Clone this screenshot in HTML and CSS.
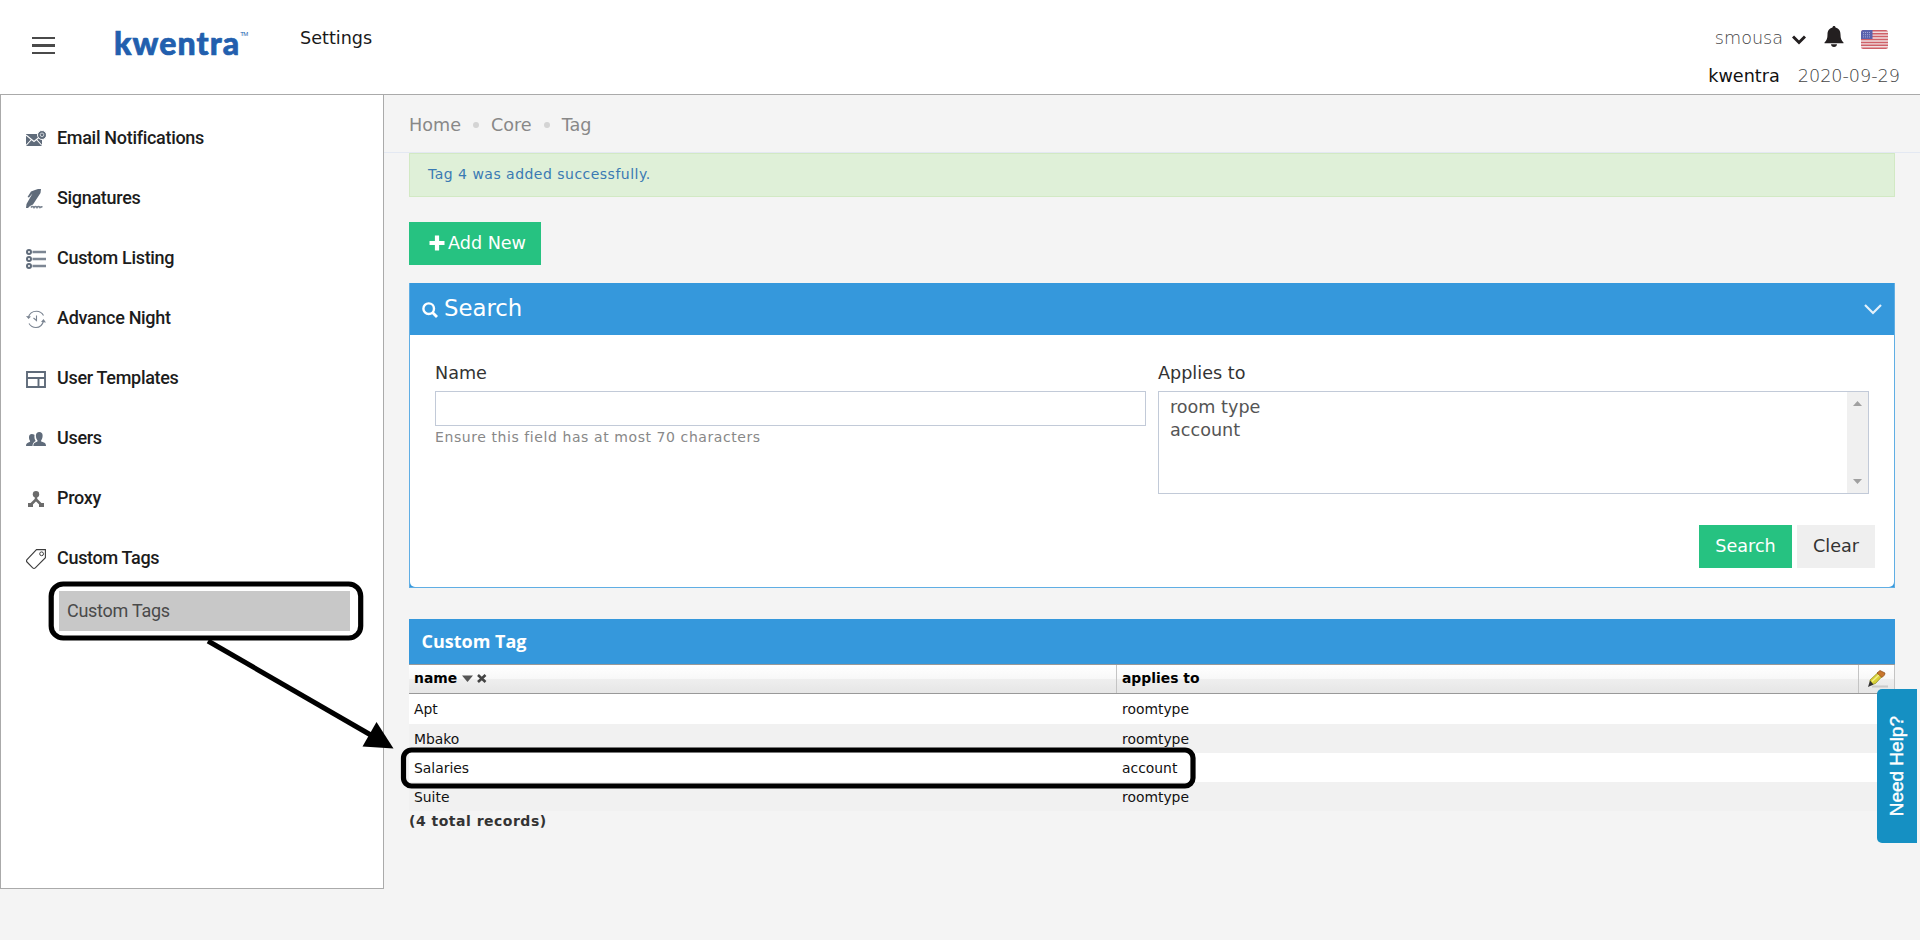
FILE: index.html
```
<!DOCTYPE html>
<html lang="en">
<head>
<meta charset="utf-8">
<title>Settings</title>
<link rel="stylesheet" href="styles.css">
</head>
<body>
<div class="page">
  <header class="topbar">
    <svg class="menu-icon" width="23" height="17" viewBox="0 0 23 17"><path d="M0 1h23M0 16h23" stroke="#4a4a4a" stroke-width="2"/><path d="M0 8.500h23" stroke="#4a4a4a" stroke-width="3"/></svg>
    <div class="logo">kwentra<span class="logo-tm">TM</span></div>
    <div class="topbar-title">Settings</div>
    <div class="account">
      <div class="account-row account-row-first">
        <span class="user">smousa</span>
        <svg class="caret" width="14" height="10" viewBox="0 0 14 10"><path d="M1 1.5l6 6 6-6" fill="none" stroke="#231f20" stroke-width="3"/></svg>
        <svg class="bell" width="20" height="21" viewBox="0 0 20 21"><path fill="#231f20" d="M10 0c1 0 1.500.6 1.500 1.500 3.500.8 5 3.500 5 7 0 4 1 6 3 8v.8H.5v-.8c2-2 3-4 3-8 0-3.500 1.500-6.200 5-7C8.500.6 9 0 10 0zM7 18.300h6c0 1.600-1.300 2.700-3 2.700s-3-1.100-3-2.700z"/></svg>
        <svg class="flag" width="27" height="19" viewBox="0 0 27 19"><defs><clipPath id="fc"><rect width="27" height="19" rx="2.500"/></clipPath></defs><g clip-path="url(#fc)"><rect width="27" height="19" fill="#f1dfe1"/><path d="M0 .8h27M0 3.700h27M0 6.600h27M0 9.500h27M0 12.400h27M0 15.300h27M0 18.200h27" stroke="#cf6068" stroke-width="1.500"/><rect width="11.500" height="9" fill="#5b62ad"/><path d="M2 2.500h8M2 4.700h8M2 6.900h8" stroke="#a3a8d6" stroke-width="1" stroke-dasharray="1 1"/></g></svg>
      </div>
      <div class="account-row account-row-second"><span class="tenant">kwentra</span><span class="date">2020-09-29</span></div>
    </div>
  </header>
  <div class="body">
    <nav class="sidebar">
      <a class="item"><svg width="20" height="20" viewBox="0 0 20 20"><path fill="#5f6b7a" d="M0 5h16v12H0z"/><path d="M0 6l8 6.500L16 6M0 16.500l5.500-6M16 16.500l-5.500-6" fill="none" stroke="#fff" stroke-width="1.100"/><circle cx="16" cy="6" r="4.500" fill="#5f6b7a" stroke="#fff"/><circle cx="16" cy="5.800" r="1.800" fill="none" stroke="#d7dbe0" stroke-width=".9"/></svg>Email Notifications</a>
      <a class="item"><svg width="20" height="20" viewBox="0 0 20 20"><path fill="#5f6b7a" d="M9 1l3-1h3l-.5 4L7 15.500l-3 1.500-2 2H0l.5-4L6.500 4.500 3 8.500 1.500 8 5 2.500z"/><path d="M5 18.500q1.500-2 3 0 1.500-2 3 0 1.500-2 3 0 1-1 2.500-.5" fill="none" stroke="#7a8491" stroke-width="1.700"/></svg>Signatures</a>
      <a class="item"><svg width="20" height="20" viewBox="0 0 20 20"><g fill="none" stroke="#5f6b7a" stroke-width="2"><circle cx="3" cy="3" r="2"/><circle cx="3" cy="10" r="2"/><circle cx="3" cy="17" r="2"/></g><path d="M6.500 3H20M6.500 10H20M6.500 17H20" stroke="#7c8693" stroke-width="2.300"/></svg>Custom Listing</a>
      <a class="item"><svg width="20" height="20" viewBox="0 0 20 20"><path d="M2.500 8.500C3.500 4 7 2.200 10.500 2.200c3 0 5.500 1.500 7 4.300M17.500 12c-1 4-4 6.500-7.500 6.500-3 0-5.500-1.500-7-4M10.500 6.500v5l-3-2.500" fill="none" stroke="#7a8491" stroke-width="1.100"/><path fill="#7a8491" d="M0 7l5 .5L2.500 10zM20 13.500l-5-.5 2.500-3z"/></svg>Advance Night</a>
      <a class="item"><svg width="20" height="20" viewBox="0 0 20 20"><path d="M1 3h18v15H1zM1 9h18M12.500 9v9" fill="none" stroke="#5f6b7a" stroke-width="1.900"/></svg>User Templates</a>
      <a class="item"><svg width="20" height="20" viewBox="0 0 20 20"><path fill="#5f6b7a" d="M0 17c0-2.500 1-3 3.500-4 .8-.4.8-1 .3-1.600C2.700 9.700 2.300 5 5.800 5c2 0 2.700 1 2.700 1-.3 2 0 4.500 1.200 6-1.700.8-3 2-3.200 5z"/><path fill="#5f6b7a" d="M7.300 17c0-2.500 1-3.200 3.500-4.200 1-.4.900-1.100.4-1.800C9.500 8.500 9 3 13.300 3s3.800 5.500 2.100 8c-.5.700-.5 1.400.4 1.800 3.200 1 4.200 1.700 4.200 4.200z"/></svg>Users</a>
      <a class="item"><svg width="20" height="20" viewBox="0 0 20 20"><circle cx="10" cy="5.200" r="3.200" fill="#6b6b6b"/><path d="M10 7v4.500M10 10.500l-5.500 5.500M10 10.500l5.500 5.500" stroke="#6b6b6b" stroke-width="2.500"/><path fill="#6b6b6b" d="M2 14h5v4H2zM13 14h5v4h-5z"/></svg>Proxy</a>
      <a class="item"><svg width="20" height="20" viewBox="0 0 20 20"><path d="M10.500.6L19.400.6 19.400 8.700 9.300 18.800Q8 20 6.700 18.800L1 13Q0 12 1 10.700z" fill="none" stroke="#3c3c3c" stroke-width="1.100"/><circle cx="15.600" cy="4.800" r="1.900" fill="none" stroke="#3c3c3c"/></svg>Custom Tags</a>
      <a class="subitem">Custom Tags</a>
    </nav>
    <main class="main">
      <div class="crumbs"><span>Home</span><i></i><span>Core</span><i></i><span>Tag</span></div>
      <div class="content">
        <div class="alert">Tag 4 was added successfully.</div>
        <a class="btn btn-green btn-add"><svg width="16" height="16" viewBox="0 0 16 16"><path d="M8 .5v15M.5 8h15" stroke="#fff" stroke-width="4.200"/></svg>Add New</a>
        <section class="panel">
          <div class="panel-head">
            <svg width="16" height="16" viewBox="0 0 16 16"><circle cx="6.700" cy="6.700" r="5.300" fill="none" stroke="#fff" stroke-width="2.400"/><path d="M10.500 10.500l4.500 4.500" stroke="#fff" stroke-width="2.800"/></svg>
            <h2>Search</h2>
            <svg class="panel-caret" width="18" height="11" viewBox="0 0 18 11"><path d="M1 1l8 8 8-8" fill="none" stroke="#e4f1fb" stroke-width="2.200"/></svg>
          </div>
          <div class="panel-body">
            <div class="fields">
              <div class="field">
                <label>Name</label>
                <div class="input"></div>
                <div class="hint">Ensure this field has at most 70 characters</div>
              </div>
              <div class="field">
                <label>Applies to</label>
                <div class="listbox">
                  <div class="options"><div>room type</div><div>account</div></div>
                  <div class="scroll"><svg width="9" height="5" viewBox="0 0 9 5"><path d="M0 5L4.500 0 9 5z" fill="#a0a0a0"/></svg><svg width="9" height="5" viewBox="0 0 9 5"><path d="M0 0l4.500 5L9 0z" fill="#a0a0a0"/></svg></div>
                </div>
              </div>
            </div>
            <div class="actions"><a class="btn btn-green btn-search">Search</a><a class="btn btn-clear">Clear</a></div>
          </div>
        </section>
        <section class="grid">
          <div class="grid-title">Custom Tag</div>
          <div class="row row-head">
            <div class="cell">name <svg class="sort" width="25" height="10" viewBox="0 0 25 10"><path fill="#555" d="M0 2.500h11L5.500 9z"/><path d="M16 2l7.500 7M23.500 2l-7.500 7" stroke="#444" stroke-width="2.600"/></svg></div>
            <div class="cell">applies to</div>
            <div class="cell cell-edit"><svg width="22" height="18" viewBox="0 0 22 18"><path d="M5 16.500h16" stroke="#bdbdbd" stroke-width="2" opacity=".7"/><path d="M3 10L10.500 3 15.500 6 8.500 13.500 3.500 15z" fill="#d8d036" stroke="#8d861c" stroke-width=".7"/><path d="M5 11.500l7.500-7" stroke="#f3ee8a" stroke-width="1.500"/><path d="M10 3L13 .5 18 3 17.500 5 15 7.500z" fill="#c9772e" stroke="#8a4c17" stroke-width=".7"/><path d="M3 10.500l3.500 4L1 17z" fill="#333"/></svg></div>
          </div>
          <div class="row row-first"><div class="cell">Apt</div><div class="cell">roomtype</div></div>
          <div class="row row-alt"><div class="cell">Mbako</div><div class="cell">roomtype</div></div>
          <div class="row"><div class="cell">Salaries</div><div class="cell">account</div></div>
          <div class="row row-alt"><div class="cell">Suite</div><div class="cell">roomtype</div></div>
          <div class="total">(4 total records)</div>
        </section>
      </div>
    </main>
  </div>
</div>
<svg class="callouts" width="1920" height="943" viewBox="0 0 1920 943">
  <rect x="51.200" y="584" width="309.500" height="54" rx="12" fill="none" stroke="#000" stroke-width="5.200"/>
  <rect x="403.500" y="750" width="789.500" height="36" rx="8" fill="none" stroke="#000" stroke-width="5.200"/>
  <path d="M208 641L376 738" stroke="#000" stroke-width="5"/>
  <path d="M393.500 748.500L376.500 722 362.500 746.500z" fill="#000"/>
</svg>
<a class="help"><span>Need Help?</span></a>
</body>
</html>
```
FILE: styles.css
```
* { box-sizing: border-box; }
body {
  margin: 0;
  background: #fff;
  color: #222;
  font: 17.6px/26px "DejaVu Sans", sans-serif;
  overflow: hidden;
}
.page { height: 940px; background: #f4f4f4; }

.topbar {
  height: 95px;
  display: flex;
  align-items: flex-start;
  background: #fff;
  border-bottom: 1px solid #aaa;
}
.menu-icon { margin: 37px 0 0 32px; }
.logo {
  display: flex;
  width: 135px;
  margin: 21px 0 0 59px;
  font: 900 32px/44px Lato, sans-serif;
  letter-spacing: 1.1px;
  -webkit-text-stroke: .7px #225fae;
  color: #225fae;
}
.logo-tm { font: 6px/26px "Liberation Sans", sans-serif; letter-spacing: -.5px; -webkit-text-stroke: 0; }
.topbar-title { margin: 25px 0 0 51px; color: #1a1a1a; }
.account { margin: 25px 20px 0 auto; }
.account-row { display: flex; align-items: flex-start; }
.account-row-first { justify-content: flex-end; margin-right: 12px; }
.account-row-second { margin-top: 12px; }
.user { font-weight: 200; color: #444; }
.caret { margin: 10px 0 0 9px; }
.bell { margin: 1px 0 0 18px; }
.flag { margin: 5px 0 0 17px; }
.tenant { color: #111; }
.date { margin-left: 18px; font-weight: 200; color: #444; }

.body { display: flex; align-items: flex-start; }
.sidebar {
  width: 384px;
  height: 794px;
  padding-top: 13px;
  background: #fff;
  border: 1px solid #aaa;
  border-top: 0;
}
.item {
  display: flex;
  height: 60px;
  padding-left: 25px;
  gap: 11px;
  align-items: center;
  font: 500 18px/26px Roboto, sans-serif;
  letter-spacing: -.31px;
  color: #1c1c1c;
}
.item svg { margin-top: 1px; }
.subitem {
  display: block;
  width: 291px;
  margin: 3px 0 0 58px;
  padding-left: 8px;
  background: #c8c8c8;
  font: 18px/40px Roboto, sans-serif;
  letter-spacing: -.27px;
  color: #4a4a4a;
}

.main { flex: 1; }
.crumbs {
  display: flex;
  align-items: center;
  height: 58px;
  padding: 2px 0 0 25px;
  border-bottom: 1px solid #e3e8f2;
  color: #888;
}
.crumbs i { width: 6px; height: 6px; margin: 0 12px; border-radius: 50%; background: #d4d4d4; }
.content { padding: 0 25px; }
.alert {
  height: 44px;
  padding-left: 18px;
  background: #dff0d8;
  border: 1px solid #d2e9c4;
  font-size: 14px;
  letter-spacing: .48px;
  line-height: 40px;
  color: #3a7ab3;
}
.btn { display: inline-flex; height: 43px; padding-bottom: 2px; align-items: center; justify-content: center; }
.btn-green { background: #26c281; color: #fff; }
.btn-add { display: flex; width: 132px; margin-top: 25px; padding-left: 5px; gap: 3px; }
.btn-search { width: 93px; }
.btn-clear { width: 78px; background: #efefef; color: #333; }

.panel { height: 305px; margin-top: 18px; background: #3598dc; border: 1px solid #60aee4; border-top: 0; }
.panel-head { display: flex; height: 52px; padding: 0 12px; align-items: center; color: #fff; }
.panel-head svg { margin-top: 2px; }
.panel-head .panel-caret { margin-top: 0; }
.panel-head h2 { margin: 0 auto 2px 6px; font-size: 22.8px; font-weight: 400; }
.panel-body { height: 252px; padding: 25px; background: #fff; border-radius: 0 0 5px 5px; }
.fields { display: grid; grid-template-columns: 1fr 1fr; gap: 12px; height: 165px; }
.field label { display: block; height: 31px; color: #333; }
.input { height: 35px; border: 1px solid #c2cad8; }
.hint { font-size: 14px; letter-spacing: .58px; line-height: 22px; color: #888; }
.listbox { display: flex; height: 103px; border: 1px solid #c2cad8; }
.options { flex: 1; padding: 4px 0 0 11px; line-height: 23px; color: #555; }
.scroll { display: flex; flex-direction: column; justify-content: space-between; align-items: center; width: 21px; padding: 9px 0; background: #f0f0f0; }
.actions { display: flex; justify-content: flex-end; gap: 5px; margin-right: -6px; }

.grid { margin-top: 31px; }
.grid-title { height: 45px; padding-left: 12.5px; background: #3598dc; color: #fff; font: 700 18px/45px "Open Sans", sans-serif; }
.row { display: grid; grid-template-columns: 708px 1fr 36px; height: 29px; background: #fff; font-size: 13.9px; line-height: 30px; color: #111; }
.row-first { height: 30px; line-height: 31px; }
.row-alt { background: #f1f1f1; }
.row-head {
  height: 30px;
  border-top: 1px solid #999;
  border-bottom: 1px solid #999;
  background: linear-gradient(#fff, #f8f8f8 48%, #eee 52%, #e6e6e6);
  font-weight: 700;
  line-height: 27px;
  color: #000;
}
.cell { padding-left: 5px; }
.row-head .cell { height: 28px; border-right: 1px solid #c4c4c4; }
.cell-edit svg { display: block; margin: 5px 0 0 3px; }
.total { font-size: 14px; letter-spacing: .5px; font-weight: 700; line-height: 20px; color: #333; }

.callouts { position: absolute; left: 0; top: 0; pointer-events: none; }
.help {
  position: absolute;
  right: 3px;
  top: 689px;
  display: flex;
  width: 40px;
  height: 154px;
  align-items: center;
  justify-content: center;
  border-radius: 5px 0 0 5px;
  background: #1590c3;
  color: #fff;
  font: 19px/40px "Liberation Sans", sans-serif;
  -webkit-text-stroke: .4px #fff;
}
.help span { writing-mode: vertical-rl; transform: rotate(180deg); }
```
